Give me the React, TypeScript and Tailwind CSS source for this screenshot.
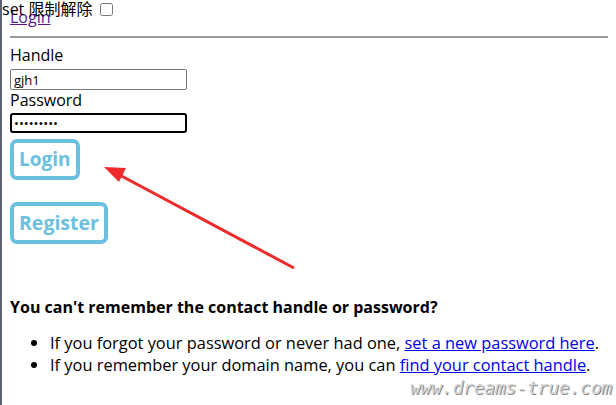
import React from 'react';

const FONT = "font-['Open_Sans','Noto_Sans_CJK_SC',sans-serif]";

function Arrow() {
  return (
    <svg className="absolute left-0 top-0 pointer-events-none" width="616" height="405">
      <line x1="292" y1="268" x2="112" y2="172" stroke="#ee2a2a" strokeWidth="3" />
      <polygon points="102,167 124,168 117,182" fill="#ee2a2a" />
    </svg>
  );
}

export default function App() {
  return (
    <div className={`relative h-[405px] w-[616px] overflow-hidden bg-white border-l-2 border-[#5d6274] text-black ${FONT}`}>
      {/* injected userscript toggle, sits over the page */}
      <label className="absolute left-0 top-0 z-10 flex items-center text-[16px] leading-[19px]">
        set 限制解除
        <input type="checkbox" className="ml-[8px] h-[13px] w-[13px]" />
      </label>

      <div className="px-2 pt-[7px]">
        <a href="#" className="block w-fit text-[16px] leading-[21px] text-[#551a8b] underline">Login</a>
        <hr className="mt-[8px] border-t-2 border-[#9b9b9b]" />

        <div className="mt-[7px] text-[16px] leading-[21px]">Handle</div>
        <input
          defaultValue="gjh1"
          className="mt-[3px] block h-[21px] w-[177px] rounded-[2px] border border-[#767676] px-[3px] text-[13px]"
        />
        <div className="text-[16px] leading-[21px]">Password</div>
        <input
          type="password"
          defaultValue="123456789"
          className="mt-[2px] block h-[20px] w-[177px] rounded-[3px] border-2 border-black px-[2px] text-[13px] outline-none"
        />

        <button className="mt-[6px] block h-[41px] rounded-[7px] border-4 border-[#6bbfe0] px-[5px] text-[19px] font-bold text-[#6bbfe0]">
          Login
        </button>
        <button className="mt-[22px] block h-[42px] rounded-[7px] border-4 border-[#6bbfe0] px-[5px] text-[19.5px] font-bold text-[#6bbfe0]">
          Register
        </button>

        <h3 className="mt-[53px] text-[16px] font-bold leading-[21px]">
          You can't remember the contact handle or password?
        </h3>
        <ul className="mt-[14px] list-disc pl-10 text-[16.4px] leading-[22px]">
          <li>
            If you forgot your password or never had one,{' '}
            <a href="#" className="text-[#0000ee] underline">set a new password here</a>.
          </li>
          <li>
            If you remember your domain name, you can{' '}
            <a href="#" className="text-[#0000ee] underline">find your contact handle</a>.
          </li>
        </ul>
      </div>

      <div className="absolute right-[4px] top-[377px] font-['DejaVu_Sans_Mono',monospace] italic text-[18px] leading-[22px] tracking-[-0.2px] text-[#d4d4d4] [text-shadow:1px_1px_0_#8a8a8a]">
        www.dreams-true.com
      </div>

      <Arrow />
    </div>
  );
}
